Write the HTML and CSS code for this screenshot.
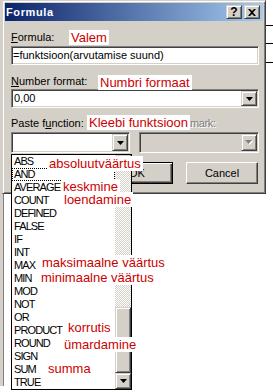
FILE: index.html
```html
<!DOCTYPE html>
<html lang="et">
<head>
    <meta charset="UTF-8" />
    <meta name="viewport" content="width=device-width, initial-scale=1.0"/>
    <title>Formula</title>
    <link rel="stylesheet" href="styles.css">
</head>
<body>
    <div class="screen">
        <!-- document behind the dialog -->
        <div class="doc">
            <div class="doc-row"></div>
            <div class="doc-row tall"></div>
            <div class="doc-row"></div>
        </div>
        <div class="doc-edge"></div>

        <div class="dialog">
            <div class="title-bar">
                <span class="title">Formula</span>
                <div class="caption-buttons">
                    <span class="caption-btn">?</span>
                    <span class="caption-btn">
                        <svg width="8" height="7" viewBox="0 0 8 7"><path d="M0 0h2l2 2 2-2h2l-3 3.5 3 3.5h-2l-2-2-2 2h-2l3-3.5z" fill="#000"/></svg>
                    </span>
                </div>
            </div>

            <div class="dialog-body">
                <label class="field-label"><u>F</u>ormula:</label>
                <div class="edit">=funktsioon(arvutamise suund)</div>

                <label class="field-label spaced"><u>N</u>umber format:</label>
                <div class="combo">
                    <span class="combo-text">0,00</span>
                    <span class="drop-btn">
                        <svg width="7" height="4" viewBox="0 0 7 4"><path d="M0 0h7l-3.5 4z" fill="#000"/></svg>
                    </span>
                </div>

                <div class="paste-row">
                    <div class="paste-col">
                        <label class="field-label">Paste f<u>u</u>nction:</label>
                        <div class="combo tall">
                            <span class="combo-text"></span>
                            <span class="drop-btn">
                                <svg width="7" height="4" viewBox="0 0 7 4"><path d="M0 0h7l-3.5 4z" fill="#000"/></svg>
                            </span>
                        </div>
                    </div>
                    <div class="paste-col wide">
                        <label class="field-label disabled">Paste <u>b</u>ookmark:</label>
                        <div class="combo tall disabled">
                            <span class="combo-text"></span>
                            <span class="drop-btn">
                                <svg width="8" height="5" viewBox="0 0 8 5"><path d="M1 1h7l-3.5 4z" fill="#fff"/><path d="M0 0h7l-3.5 4z" fill="#808080"/></svg>
                            </span>
                        </div>
                    </div>
                </div>

                <div class="button-row">
                    <button class="btn default">OK</button>
                    <button class="btn">Cancel</button>
                </div>
            </div>
        </div>

        <!-- opened Paste function list -->
        <div class="func-list">
            <ul class="func-items">
                <li>ABS</li>
                <li class="focus">AND</li>
                <li>AVERAGE</li>
                <li>COUNT</li>
                <li>DEFINED</li>
                <li>FALSE</li>
                <li>IF</li>
                <li>INT</li>
                <li>MAX</li>
                <li>MIN</li>
                <li>MOD</li>
                <li>NOT</li>
                <li>OR</li>
                <li>PRODUCT</li>
                <li>ROUND</li>
                <li>SIGN</li>
                <li>SUM</li>
                <li>TRUE</li>
            </ul>
            <div class="scrollbar">
                <span class="sb-btn">
                    <svg width="7" height="4" viewBox="0 0 7 4"><path d="M0 4h7l-3.5-4z" fill="#000"/></svg>
                </span>
                <span class="sb-track"></span>
                <span class="sb-thumb"></span>
                <span class="sb-btn">
                    <svg width="7" height="4" viewBox="0 0 7 4"><path d="M0 0h7l-3.5 4z" fill="#000"/></svg>
                </span>
            </div>
        </div>

        <!-- Estonian notes -->
        <span class="note note-valem">Valem</span>
        <span class="note note-numbri">Numbri formaat</span>
        <span class="note note-kleebi">Kleebi funktsioon</span>
        <span class="note note-abs">absoluutväärtus</span>
        <span class="note note-avg">keskmine</span>
        <span class="note note-count">loendamine</span>
        <span class="note note-max">maksimaalne väärtus</span>
        <span class="note note-min">minimaalne väärtus</span>
        <span class="note note-product">korrutis</span>
        <span class="note note-round">ümardamine</span>
        <span class="note note-sum">summa</span>
    </div>
</body>
</html>
```

FILE: styles.css
```css
/* Reset and base styles */
* {
    box-sizing: border-box;
    margin: 0;
    padding: 0;
}

body {
    font-family: 'Liberation Sans', Arial, sans-serif;
    font-size: 11px;
    color: #000000;
    background: #ffffff;
}

.screen {
    position: relative;
    width: 273px;
    height: 392px;
    overflow: hidden;
}

/* Word document behind */
.doc {
    padding-top: 25px;
}

.doc-row {
    height: 18px;
    border-top: 1px solid #000000;
}

.doc-row.tall {
    height: 19px;
}

.doc-edge {
    position: absolute;
    left: 0;
    top: 0;
    width: 4px;
    height: 386px;
    background: #d4d0c8;
    border-right: 1px solid #808080;
}

/* Dialog window */
.dialog {
    position: absolute;
    left: 2px;
    top: 0;
    width: 264px;
    height: 194px;
    padding: 2px;
    background: #d4d0c8;
    border: 1px solid;
    border-color: #d4d0c8 #404040 #404040 #d4d0c8;
    box-shadow: inset 1px 1px #ffffff, inset -1px -1px #808080;
}

.title-bar {
    display: flex;
    align-items: center;
    justify-content: space-between;
    height: 18px;
    padding: 0 3px 0 1px;
    background: linear-gradient(to right, #0a246a, #a6caf0);
}

.title {
    color: #ffffff;
    font-weight: 700;
    letter-spacing: 0.6px;
}

.caption-buttons {
    display: flex;
    gap: 2px;
}

.caption-btn,
.drop-btn,
.sb-btn,
.sb-thumb {
    background: #d4d0c8;
    border: 1px solid;
    border-color: #d4d0c8 #404040 #404040 #d4d0c8;
    box-shadow: inset 1px 1px #ffffff, inset -1px -1px #808080;
}

.caption-btn {
    display: flex;
    align-items: center;
    justify-content: center;
    width: 16px;
    height: 14px;
    font-weight: 700;
    font-size: 12px;
    line-height: 12px;
}

.dialog-body {
    padding: 10px 4px 0 6px;
}

.field-label {
    display: block;
    height: 13px;
    line-height: 13px;
}

.field-label.spaced {
    margin-top: 10px;
}

.field-label.disabled {
    color: #808080;
    text-shadow: 1px 1px #ffffff;
    letter-spacing: -0.4px;
}

.edit,
.combo {
    background: #ffffff;
    border: 1px solid;
    border-color: #808080 #ffffff #ffffff #808080;
    box-shadow: inset 1px 1px #404040, inset -1px -1px #d4d0c8;
}

.edit {
    margin-top: 2px;
    height: 19px;
    padding: 0 1px;
    line-height: 16px;
    white-space: nowrap;
}

.combo {
    display: flex;
    margin-top: 1px;
    height: 19px;
    padding: 1px;
}

.combo-text {
    flex: 1;
    padding-left: 1px;
    line-height: 15px;
}

.drop-btn {
    display: flex;
    align-items: center;
    justify-content: center;
    width: 16px;
    height: 100%;
}

.combo.tall {
    margin-top: 2px;
    height: 21px;
}

.combo.disabled {
    background: #d4d0c8;
}

.paste-row {
    display: flex;
    gap: 9px;
    margin-top: 9px;
}

.paste-col {
    width: 120px;
}

.paste-col.wide {
    width: 121px;
}

.button-row {
    display: flex;
    justify-content: flex-end;
    gap: 13px;
    margin-top: 9px;
    padding-right: 1px;
}

.btn {
    width: 72px;
    height: 22px;
    font-family: inherit;
    font-size: 11px;
    color: #000000;
    background: #d4d0c8;
    border: 1px solid;
    border-color: #ffffff #404040 #404040 #ffffff;
    box-shadow: inset -1px -1px #808080, inset 1px 1px #d4d0c8;
}

.btn.default {
    border: 1px solid #000000;
    box-shadow: inset 1px 1px #ffffff, inset -1px -1px #404040, inset -2px -2px #808080;
}

/* Dropped list */
.func-list {
    position: absolute;
    left: 11px;
    top: 154px;
    width: 121px;
    height: 236px;
    display: flex;
    background: #ffffff;
    border: 1px solid #000000;
}

.func-items {
    flex: 1;
    list-style: none;
}

.func-items li {
    height: 13px;
    line-height: 13px;
    padding-left: 2px;
    letter-spacing: -0.9px;
}

.func-items li.focus {
    outline: 1px dotted #000000;
    outline-offset: -1px;
}

.scrollbar {
    display: flex;
    flex-direction: column;
    width: 16px;
}

.sb-btn {
    display: flex;
    align-items: center;
    justify-content: center;
    height: 16px;
}

.sb-track {
    height: 136px;
    background: repeating-conic-gradient(#d4d0c8 0 25%, #ffffff 0 50%) 0 0 / 2px 2px;
}

.sb-thumb {
    flex: 1;
}

/* Red notes pasted over the screenshot */
.note {
    position: absolute;
    padding: 0 2px;
    font-size: 13px;
    line-height: 15px;
    color: #cc0000;
    background: #ffffff;
    white-space: nowrap;
}

.note-valem { left: 69px; top: 30px; }
.note-numbri { left: 98px; top: 75px; }
.note-kleebi { left: 87px; top: 115px; }
.note-abs { left: 47px; top: 156px; }
.note-avg { left: 61px; top: 179px; }
.note-count { left: 62px; top: 192px; }
.note-max { left: 40px; top: 255px; }
.note-min { left: 39px; top: 270px; }
.note-product { left: 66px; top: 320px; }
.note-round { left: 62px; top: 337px; }
.note-sum { left: 46px; top: 361px; }
```
